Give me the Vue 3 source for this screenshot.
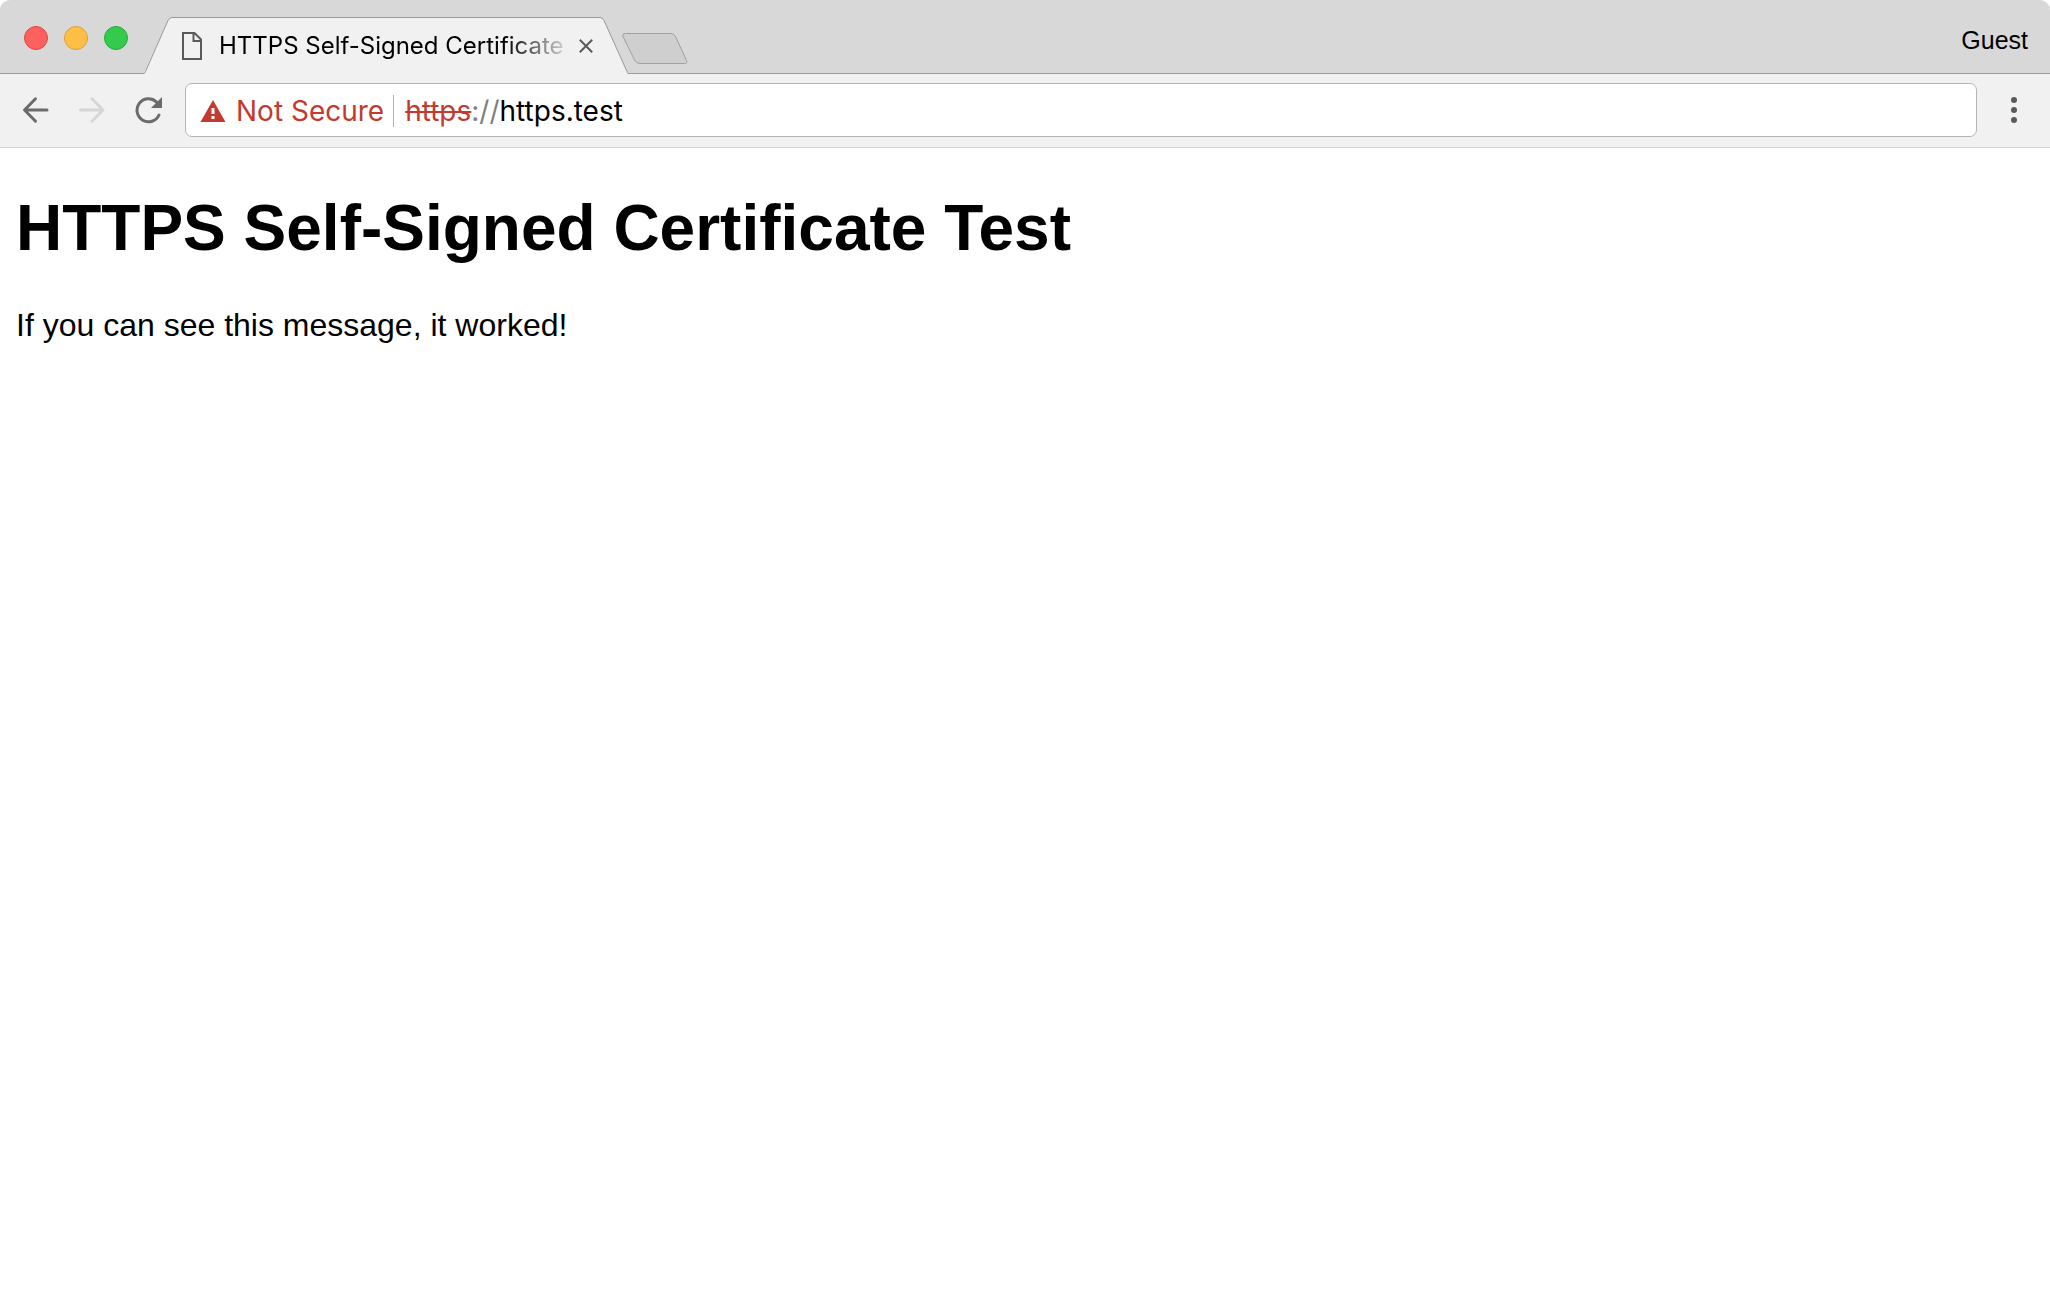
<script setup>
import { ref } from 'vue'

const pageTitle = 'HTTPS Self-Signed Certificate Test'
const host = ref('https.test')
const windowControls = [
  { name: 'Close window', kind: 'close' },
  { name: 'Minimize window', kind: 'minimize' },
  { name: 'Zoom window', kind: 'zoom' },
]
</script>

<template>
  <div class="window">
    <header class="tab-strip">
      <div class="lights">
        <button
          v-for="control in windowControls"
          :key="control.kind"
          type="button"
          class="light"
          :class="control.kind"
          :aria-label="control.name"
        ></button>
      </div>

      <div class="tab">
        <svg class="tab-shape" viewBox="0 0 484 57" aria-hidden="true">
          <path class="tab-fill" d="M0 57 L0 56.5 L24 3.5 Q25.500 .5 28 .5 L456 .5 Q458.500 .5 460 3.500 L483 54.500 Q484 56.500 484 57 Z" />
          <path class="tab-line" d="M0 56.500 Q.8 56.300 1.500 54.500 L24 3.500 Q25.500 .5 28 .5 L456 .5 Q458.500 .5 460 3.500 L483 54.500 Q483.700 56.300 484 56.500" />
        </svg>
        <svg class="file-icon" viewBox="0 0 20 28" aria-hidden="true">
          <path d="M1 1H12.500L19 7.500V27H1Z M11.500 1V9H19" />
        </svg>
        <button type="button" class="tab-title">{{ pageTitle }}</button>
        <button type="button" class="icon-button tab-close" aria-label="Close tab">
          <svg viewBox="0 0 14 14" width="14" height="14"><path d="M.8 .8L13.200 13.200M13.200 .8L.8 13.200" /></svg>
        </button>
      </div>

      <button type="button" class="icon-button new-tab" aria-label="New tab">
        <svg viewBox="0 0 66 32" width="66" height="32">
          <path d="M3.500 .5H49Q52 .5 53.500 3.500L64.500 27.500Q65.800 30.500 62.500 30.500H18Q14.500 30.500 12.800 27.500L1 3.500Q-.2 .5 3.500 .5Z" />
        </svg>
      </button>

      <button type="button" class="profile">Guest</button>
    </header>

    <nav class="toolbar">
      <button type="button" class="icon-button nav" aria-label="Back">
        <svg viewBox="0 0 28 28" width="28" height="28"><path d="M25 14H3M13.500 2.800L2.500 14L13.500 25.200" /></svg>
      </button>
      <button type="button" class="icon-button nav" aria-label="Forward" disabled>
        <svg viewBox="0 0 28 28" width="28" height="28"><path d="M2.500 14H24.500M14 2.800L25 14L14 25.200" /></svg>
      </button>
      <button type="button" class="icon-button nav reload" aria-label="Reload">
        <svg viewBox="0 0 28 28" width="28" height="28">
          <path d="M22.300 5.800A11.500 11.500 0 1 0 25 19" />
          <path class="solid" d="M28 1V12H17Z" />
        </svg>
      </button>

      <form class="omnibox" @submit.prevent>
        <button type="button" class="security">
          <svg viewBox="0 0 26 22" width="26" height="22" aria-hidden="true">
            <path class="sign" d="M13 0L25.500 22H.5Z" />
            <path class="mark" d="M11.500 8H14.500V14H11.500ZM11.500 16H14.500V19H11.500Z" />
          </svg>
          Not Secure
        </button>
        <label class="scheme" for="address"><s>https</s>://</label>
        <input id="address" v-model="host" type="text" spellcheck="false" autocomplete="off" />
      </form>

      <button type="button" class="icon-button menu" aria-label="Menu">
        <svg viewBox="0 0 6 26" width="6" height="26">
          <circle cx="3" cy="3" r="3" />
          <circle cx="3" cy="13" r="3" />
          <circle cx="3" cy="23" r="3" />
        </svg>
      </button>
    </nav>

    <main class="page">
      <h1>{{ pageTitle }}</h1>
      <p>If you can see this message, it worked!</p>
    </main>
  </div>
</template>

<style>
body {
  margin: 0;
  background: #fff;
}
</style>

<style scoped>
.window {
  font-family: Inter, "Liberation Sans", sans-serif;
  color: #000;
}

button,
input {
  margin: 0;
  padding: 0;
  border: 0;
  background: none;
  color: inherit;
  font: inherit;
}

svg {
  display: block;
  flex: none;
}

.icon-button {
  display: flex;
  align-items: center;
  justify-content: center;
  flex: none;
}

.tab-strip {
  display: flex;
  align-items: flex-end;
  height: 74px;
  padding: 0 22px 0 24px;
  box-sizing: border-box;
  border-radius: 10px 10px 0 0;
  background: #d8d8d8;
  box-shadow: inset 0 -1px #999;
}

.lights {
  display: flex;
  gap: 16px;
  padding: 0 16px 24px 0;
}

.light {
  width: 24px;
  height: 24px;
  border: 1px solid;
  border-radius: 50%;
}

.close {
  background: #fc615d;
  border-color: #df4744;
}

.minimize {
  background: #fdbf45;
  border-color: #de9f34;
}

.zoom {
  background: #34ca4e;
  border-color: #27aa35;
}

.tab {
  position: relative;
  display: flex;
  align-items: center;
  flex: none;
  width: 484px;
  height: 57px;
  padding: 0 35px 0 38px;
  box-sizing: border-box;
}

.tab-shape {
  position: absolute;
  inset: 0;
  width: 100%;
  height: 100%;
}

.tab-fill {
  fill: #f1f1f1;
}

.tab-line {
  fill: none;
  stroke: #999;
}

.file-icon {
  position: relative;
  width: 20px;
  height: 28px;
  fill: none;
  stroke: #5a5a5a;
  stroke-width: 2;
}

.tab-title {
  position: relative;
  flex: 1;
  min-width: 0;
  margin: 0 12px 0 17px;
  overflow: hidden;
  font-size: 24px;
  line-height: 32px;
  text-align: left;
  white-space: nowrap;
  mask-image: linear-gradient(to right, #000 82%, transparent 102%);
}

.tab-close {
  position: relative;
  stroke: #5a5a5a;
  stroke-width: 2;
}

.new-tab {
  position: relative;
  margin: 0 0 9px -6px;
  fill: #cfcfcf;
  stroke: #a0a0a0;
}

.profile {
  margin: 0 0 18px auto;
  font-family: "Liberation Sans", Arial, sans-serif;
  font-size: 25px;
  line-height: 32px;
}

.toolbar {
  display: flex;
  align-items: center;
  height: 74px;
  padding: 0 15px 2px 22px;
  box-sizing: border-box;
  border-bottom: 1px solid #d2d2d2;
  background: #f1f1f1;
}

.nav {
  margin-right: 28px;
  fill: none;
  stroke: #6b6b6b;
  stroke-width: 3;
  stroke-linecap: round;
  stroke-linejoin: round;
}

.nav:disabled {
  stroke: #d6d6d6;
}

.reload {
  margin-right: 23px;
}

.solid {
  fill: #6b6b6b;
  stroke: none;
}

.omnibox {
  display: flex;
  align-items: center;
  flex: 1;
  height: 54px;
  padding: 2px 14px 0;
  box-sizing: border-box;
  border: 1px solid #b5b5b5;
  border-radius: 7px;
  background: #fff;
  font-size: 28px;
  line-height: 32px;
}

.security {
  display: flex;
  align-items: center;
  gap: 10px;
  padding-right: 9px;
  border-right: 1px solid #b0b0b0;
  color: #c23a30;
  white-space: nowrap;
}

.sign {
  fill: #c23a30;
}

.mark {
  fill: #fff;
}

.scheme {
  padding-left: 11px;
  color: #808080;
}

.scheme s {
  color: #c23a30;
  text-decoration-thickness: 2px;
}

.omnibox input {
  flex: 1;
  min-width: 0;
  outline: 0;
}

.menu {
  width: 42px;
  margin-left: 16px;
  fill: #5a5a5a;
}

.page {
  padding: 43px 16px;
  font-family: "Liberation Sans", Arial, sans-serif;
}

h1 {
  margin: 0;
  font-size: 64px;
  line-height: 74px;
}

p {
  margin: 42px 0 0;
  font-size: 32px;
  line-height: 36px;
}
</style>
